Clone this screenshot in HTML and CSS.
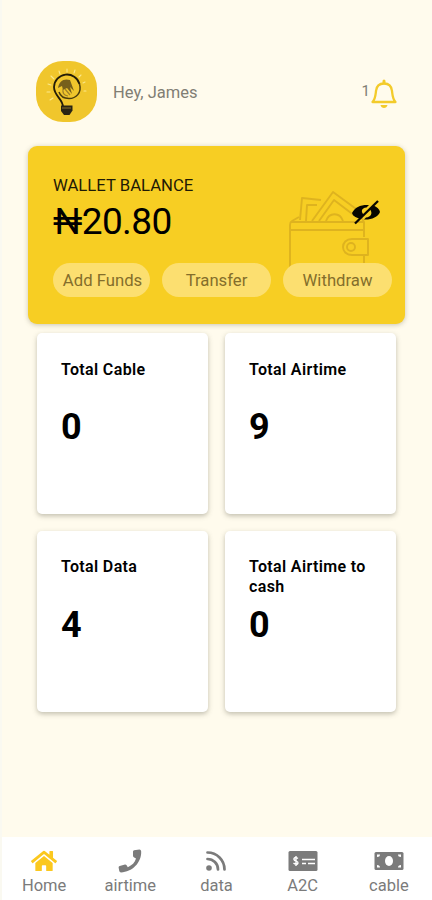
FILE: index.html
```html
<!DOCTYPE html>
<html lang="en">
<head>
  <meta charset="UTF-8">
  <title>Wallet</title>
  <meta name="viewport" content="width=device-width, initial-scale=1.0">
  <link rel="stylesheet" href="styles.css">
</head>
<body>

  <header class="header">
    <svg class="avatar" viewBox="0 0 61 61">
      <rect width="61" height="61" rx="27" fill="#f0c62c"/>
      <g stroke="#fbe88a" stroke-width="1.1" stroke-linecap="round">
        <path d="M31 11V8M24 13l-1-3M38 12l1-3M18 18l-3-3M43 16l2-2M15 24l-3-1M47 22l2-1M14 31h-3M48 30h2M17 37l-3 2"/>
      </g>
      <path d="M27 46C27 38 18 35 18 26A13 13 0 0 1 43.500 23" fill="none" stroke="#231d08" stroke-width="1.800"/>
      <path d="M43.500 23C46 32 40 37.500 33 37.500C27 37.500 24 34 23 31" fill="none" stroke="#4b3d0d" stroke-width="1.500"/>
      <path d="M22 27C23 20 28 17 34 19L38 30L34 26L36 33L31 27L27 29L26 25Z" fill="#76601b"/>
      <path d="M27 28Q26 34 32 35M29 28L34 34" fill="none" stroke="#a08129" stroke-width="1.200"/>
      <path d="M25 44.500h11.500v5l-3 4.500h-5.500l-3-4z" fill="#292414"/>
      <path d="M26 47h9" stroke="#a58b31" stroke-width=".8"/>
    </svg>
    <p class="greeting">Hey, James</p>
    <div class="alerts">
      <span class="alert-count">1</span>
      <svg class="bell" viewBox="0 0 28 32" fill="none" stroke="#f3cb2b" stroke-width="2.300" stroke-linejoin="round">
        <path d="M2.500 25C5.500 22 5.500 18 6 14C6.500 9 9.500 6.500 14 6.500S21.500 9 22 14C22.500 18 22.500 22 25.500 25Z"/>
        <path d="M14 4v2" stroke-width="3" stroke-linecap="round"/>
        <path d="M10.500 28h7c-.5 4-6.500 4-7 0z" fill="#f3cb2b" stroke="none"/>
      </svg>
    </div>
  </header>

  <main>
    <section class="wallet">
      <svg class="wallet-art" viewBox="0 0 82 84" fill="none" stroke="#deb31f" stroke-width="1.900" stroke-linejoin="round">
        <path d="M12 31L14 9L33 11M18 32L19 16L29 16M24 32L45 3L75 25M31 32L46 11L67 27M38 32C41 23 52 23 55 32"/>
        <path d="M11 28L4 32Q2 33 2 36V84M3 33H76V48M2 41H76M76 66V84M73 28L76 33"/>
        <path d="M80 50V66H64C52 66 52 50 64 50Z"/>
        <circle cx="63" cy="58" r="4"/>
      </svg>
      <svg class="eye" viewBox="0 0 30 26">
        <path d="M1 14C4 8 10 5.500 18 6L15.500 8.500C10 9 10 13 12.500 15.500L8.500 19.500C4 18 2 17 1 14Z" fill="#080700"/>
        <path d="M22.500 6.500C26 8 28.500 10 29 13C27 18 20 21 13 20.500L15 18.500C20 18 22 14 19 10.500Z" fill="#080700"/>
        <path d="M4 24.500L27 2" stroke="#080700" stroke-width="2.300"/>
      </svg>
      <h2 class="wallet-label">WALLET BALANCE</h2>
      <p class="balance">₦20.80</p>
      <div class="actions">
        <button class="pill pill-small">Add Funds</button>
        <button class="pill">Transfer</button>
        <button class="pill">Withdraw</button>
      </div>
    </section>

    <section class="totals">
      <div class="card">
        <h3>Total Cable</h3>
        <p>0</p>
      </div>
      <div class="card">
        <h3>Total Airtime</h3>
        <p>9</p>
      </div>
      <div class="card">
        <h3>Total Data</h3>
        <p>4</p>
      </div>
      <div class="card">
        <h3>Total Airtime to cash</h3>
        <p>0</p>
      </div>
    </section>
  </main>

  <nav class="tabs">
    <a class="tab active">
      <svg width="26" viewBox="0 0 576 512" fill="currentColor"><path d="M280.370 148.260L96 300.110V464a16 16 0 0 0 16 16l112.060-.29a16 16 0 0 0 15.920-16V368a16 16 0 0 1 16-16h64a16 16 0 0 1 16 16v95.640a16 16 0 0 0 16 16.050L464 480a16 16 0 0 0 16-16V300L295.670 148.260a12.190 12.190 0 0 0-15.300 0zM571.600 251.470L488 182.560V44.050a12 12 0 0 0-12-12h-56a12 12 0 0 0-12 12v72.610L318.470 43a48 48 0 0 0-61 0L4.340 251.470a12 12 0 0 0-1.600 16.900l25.500 31A12 12 0 0 0 45.150 301l235.220-193.740a12.190 12.190 0 0 1 15.300 0L530.900 301a12 12 0 0 0 16.900-1.600l25.500-31a12 12 0 0 0-1.700-16.930z"/></svg>
      <span>Home</span>
    </a>
    <a class="tab">
      <svg width="24" viewBox="0 0 24 24" fill="currentColor"><path d="M16 1.200L21.500.5Q23 .5 23.200 2.500C23.500 14 14 23 3 23.400Q1.600 23.400 1.300 22L.6 18.500Q.6 17.300 1.700 17L7 15.600Q8 15.500 8.600 16.300L9.800 18.200C14 16.500 17 13.500 18 9.600L15.800 8.200Q14.900 7.500 15 6.500L15 2.400Q15.200 1.400 16 1.200Z"/></svg>
      <span>airtime</span>
    </a>
    <a class="tab">
      <svg width="22" viewBox="0 0 22 22" fill="none" stroke="currentColor" stroke-width="2.700" stroke-linecap="round">
        <circle cx="4" cy="18" r="2.800" fill="currentColor" stroke="none"/>
        <path d="M2.500 9A10.500 10.500 0 0 1 13 19.500M2.500 2.500A17 17 0 0 1 19.500 19.500"/>
      </svg>
      <span>data</span>
    </a>
    <a class="tab">
      <svg width="30" viewBox="0 0 30 22">
        <rect x=".5" y="1" width="29" height="20" rx="1.500" fill="currentColor"/>
        <path d="M10 8.500C8 7 5.500 7.500 6 9.500S10.500 11 10 13S7 14.500 5.500 13M8 6v10M14 9.500h13M14 13.500h4M20 13.500h7" fill="none" stroke="#fff" stroke-width="1.400"/>
      </svg>
      <span>A2C</span>
    </a>
    <a class="tab">
      <svg width="30" viewBox="0 0 30 22">
        <rect x=".5" y="2" width="29" height="18" rx="1.500" fill="currentColor"/>
        <ellipse cx="15" cy="11" rx="4" ry="5" fill="#fff"/>
        <path d="M3 4.500h3Q6 7 3 7zM27 4.500h-3Q24 7 27 7zM3 17.500h3Q6 15 3 15zM27 17.500h-3Q24 15 27 15z" fill="#fff"/>
      </svg>
      <span>cable</span>
    </a>
  </nav>

</body>
</html>
```

FILE: styles.css
```css
* {
  box-sizing: border-box;
}

body {
  margin: 0;
  height: 900px;
  display: flex;
  flex-direction: column;
  overflow: hidden;
  background: #fffbed;
  border-left: 2px solid #faf9f1;
  font-family: Roboto, sans-serif;
  color: #000;
}

h2, h3, p {
  margin: 0;
}

.header {
  display: flex;
  align-items: center;
  padding: 61px 34px 24px;
}

.avatar {
  width: 61px;
  height: 61px;
}

.greeting {
  margin-left: 16px;
  padding-top: 2px;
  font-size: 16.5px;
  color: #817e74;
}

.alerts {
  display: flex;
  margin-left: auto;
  padding-top: 2px;
}

.alert-count {
  font-size: 15px;
  color: #817e74;
  padding-top: 5px;
}

.bell {
  width: 28px;
  height: 32px;
}

.wallet {
  position: relative;
  height: 178px;
  margin: 0 27px 0 26px;
  padding: 30px 13px 0 25px;
  border-radius: 9px;
  background: #f7ce23;
  box-shadow: 0 1px 5px rgba(80, 75, 40, 0.3);
}

.wallet-art {
  position: absolute;
  top: 43px;
  left: 260px;
  width: 82px;
  height: 84px;
}

.eye {
  position: absolute;
  top: 53px;
  left: 323px;
  width: 30px;
  height: 26px;
}

.wallet-label {
  font-size: 16.700px;
  line-height: 20px;
  font-weight: 400;
  color: #1f1a05;
}

.balance {
  margin-top: 3px;
  font-size: 37px;
  line-height: 46px;
  letter-spacing: -0.6px;
}

.actions {
  position: relative;
  display: flex;
  gap: 12px;
  margin-top: 18px;
}

.pill {
  flex: 1;
  height: 34px;
  padding: 1px 0 0;
  border: 0;
  border-radius: 17px;
  background: #fcdf70;
  font-family: inherit;
  font-size: 16.700px;
  color: #846e2b;
}

.pill-small {
  flex: 0 0 97px;
  padding-left: 2px;
}

.totals {
  display: grid;
  grid-template-columns: 171px 171px;
  grid-auto-rows: 181px;
  gap: 17px;
  margin: 9px 35px 0;
}

.card {
  padding: 26px 24px;
  border-radius: 5px;
  background: #fff;
  box-shadow: 0 2px 5px rgba(80, 80, 60, 0.35);
}

.card h3 {
  min-height: 40px;
  padding-top: 1px;
  font-size: 16px;
  line-height: 20px;
  font-weight: 600;
  letter-spacing: 0.35px;
}

.card p {
  margin-top: 6px;
  font-size: 36px;
  line-height: 44px;
  font-weight: 700;
}

/* the two-line title pushes nothing down */
.card:nth-child(n+3) h3 {
  padding-top: 0;
}

.tabs {
  display: grid;
  grid-template-columns: repeat(5, 1fr);
  height: 63px;
  margin-top: auto;
  margin-left: -1px;
  background: #fff;
}

.tab {
  display: flex;
  flex-direction: column;
  align-items: center;
  padding-top: 12px;
  font-size: 16.500px;
  line-height: 20px;
  color: #7b7b7b;
}

.tab svg {
  height: 24px;
  margin-bottom: 3px;
}

.tab.active svg {
  color: #fbc81f;
}
```
